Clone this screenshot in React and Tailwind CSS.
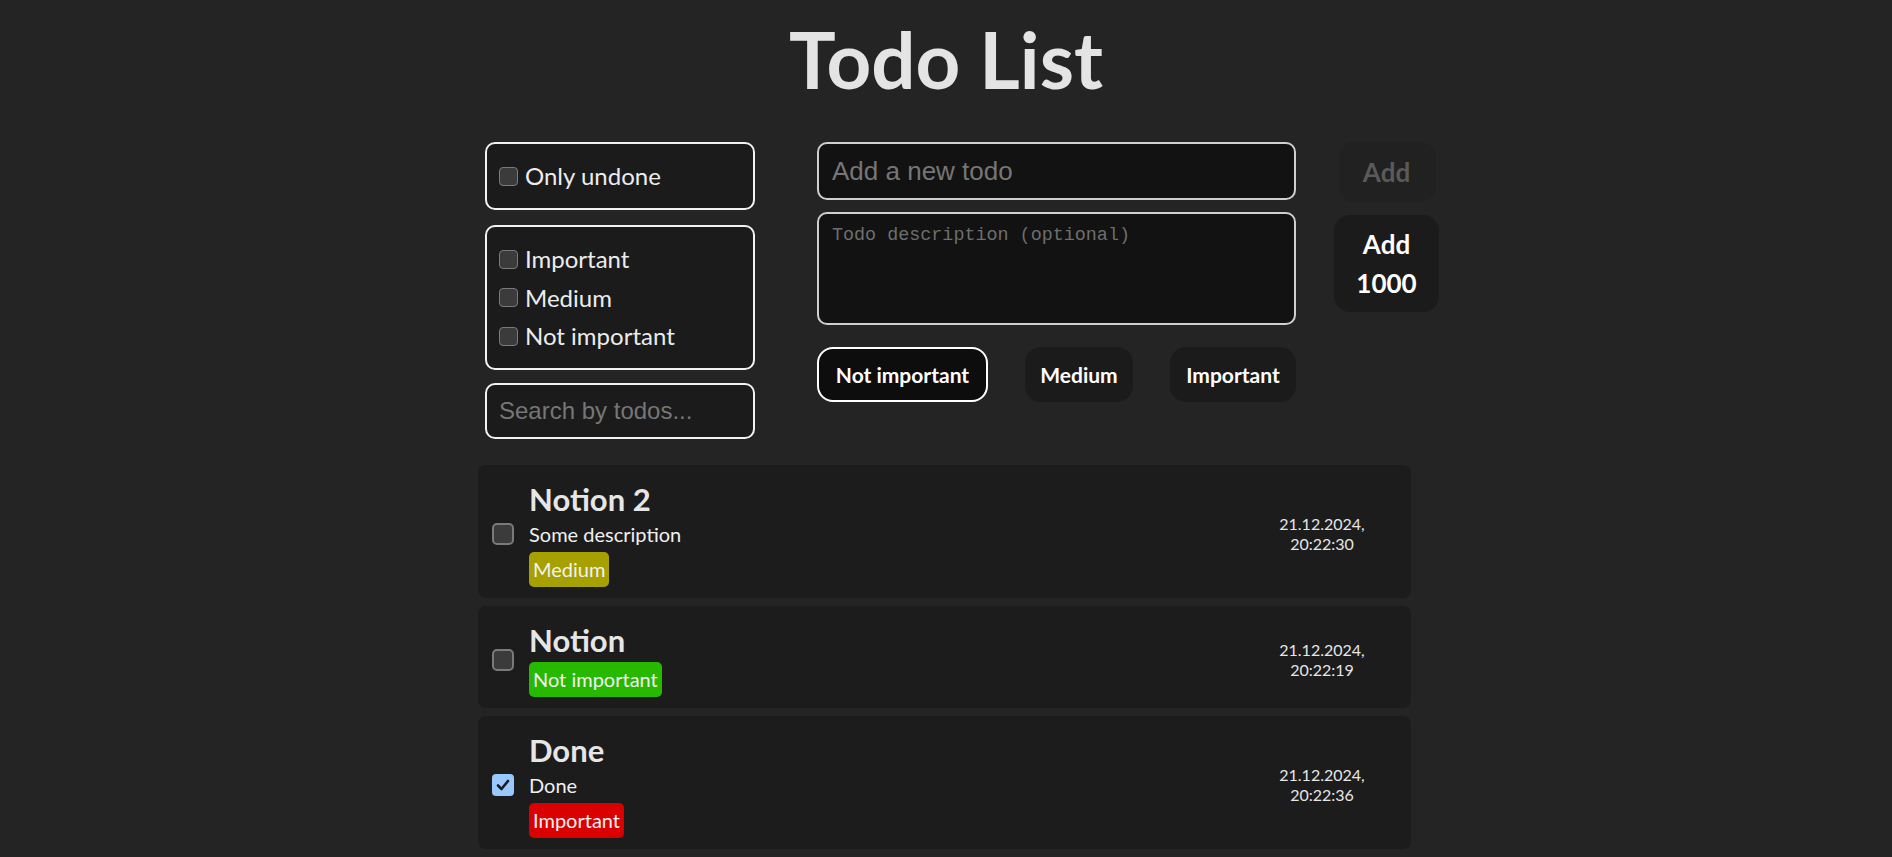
import React, { useState } from 'react';

const todos = [
  { id: 3, title: 'Notion 2', description: 'Some description', priority: 'medium', done: false, date: '21.12.2024,', time: '20:22:30' },
  { id: 2, title: 'Notion', description: '', priority: 'low', done: false, date: '21.12.2024,', time: '20:22:19' },
  { id: 1, title: 'Done', description: 'Done', priority: 'high', done: true, date: '21.12.2024,', time: '20:22:36' },
];

const badgeStyles = {
  low: { label: 'Not important', className: 'bg-[#27b800]' },
  medium: { label: 'Medium', className: 'bg-[#a6a000]' },
  high: { label: 'Important', className: 'bg-[#db0000]' },
};

const SmallBox = () => (
  <span className="w-[19px] h-[19px] shrink-0 rounded-[4px] border-[1.5px] border-[#7a7a7a] bg-[#3b3b3b]" />
);

const TodoBox = ({ checked }) =>
  checked ? (
    <span className="w-[22px] h-[22px] shrink-0 rounded-[4px] bg-[#99c8ff] flex items-center justify-center">
      <svg width="16" height="16" viewBox="0 0 16 16" fill="none">
        <path d="M3 8.5 L6.5 12 L13 4" stroke="#1b1b1b" strokeWidth="2.6" strokeLinecap="round" strokeLinejoin="round" />
      </svg>
    </span>
  ) : (
    <span className="w-[22px] h-[22px] shrink-0 rounded-[5px] border-2 border-[#7a7a7a] bg-[#3b3b3b]" />
  );

const TodoCard = ({ todo }) => {
  const badge = badgeStyles[todo.priority];
  return (
    <div className="bg-[#1c1c1c] rounded-[8px] flex items-center pl-[14px] pt-[16px] pb-[11px]">
      <TodoBox checked={todo.done} />
      <div className="ml-[15px] flex-1 flex flex-col items-start">
        <h2 className="text-[31px] font-bold leading-[36px] text-[#e6e6e6]">{todo.title}</h2>
        {todo.description && (
          <p className="text-[20px] leading-[28px] mt-[3px] text-[#f0f0f0]">{todo.description}</p>
        )}
        <span className={`mt-[4px] h-[35px] px-[4px] rounded-[5px] text-[20px] leading-[35px] text-[#f2f2f2] ${badge.className}`}>
          {badge.label}
        </span>
      </div>
      <div className="w-[120px] mr-[29px] text-center text-[16px] leading-[20px] text-[#e6e6e6]">
        <div>{todo.date}</div>
        <div>{todo.time}</div>
      </div>
    </div>
  );
};

export default function App() {
  const [priority] = useState('low');

  return (
    <div className="min-h-screen bg-[#242424] text-[#e6e6e6] font-['Lato',sans-serif]">
      <h1 className="text-center text-[78px] font-bold leading-[84px] pt-[17px] text-[#e4e4e4]">Todo List</h1>

      <div className="w-[936px] mx-auto mt-[41px]">
        <div className="flex items-start pl-[7px]">
          {/* filters */}
          <div className="w-[270px] shrink-0 flex flex-col">
            <div className="h-[68px] border-2 border-[#f2f2f2] rounded-[10px] bg-[#1b1b1b] flex items-center px-[12px]">
              <label className="flex items-center gap-[7px] text-[24px] text-[#ececec]">
                <SmallBox />
                Only undone
              </label>
            </div>
            <div className="mt-[15px] h-[145px] border-2 border-[#f2f2f2] rounded-[10px] bg-[#1b1b1b] flex flex-col justify-center px-[12px]">
              {['Important', 'Medium', 'Not important'].map(name => (
                <label key={name} className="h-[38.5px] flex items-center gap-[7px] text-[24px] text-[#ececec]">
                  <SmallBox />
                  {name}
                </label>
              ))}
            </div>
            <input
              type="text"
              placeholder="Search by todos..."
              className="mt-[13px] h-[56px] w-full border-2 border-[#f2f2f2] rounded-[10px] bg-[#1b1b1b] px-[12px] text-[24px] font-['Liberation_Sans',sans-serif] placeholder:text-[#767676] outline-none"
            />
          </div>

          {/* new todo */}
          <div className="ml-[62px] w-[479px] shrink-0 flex flex-col">
            <input
              type="text"
              placeholder="Add a new todo"
              className="h-[58px] w-full border-2 border-[#cfcfcf] rounded-[10px] bg-[#121212] px-[13px] text-[26px] font-['Liberation_Sans',sans-serif] placeholder:text-[#767676] outline-none"
            />
            <textarea
              placeholder="Todo description (optional)"
              className="mt-[12px] h-[113px] w-full resize-none border-2 border-[#cfcfcf] rounded-[10px] bg-[#121212] px-[13px] py-[10px] text-[18.4px] leading-[24px] font-['Liberation_Mono',monospace] placeholder:text-[#6e6e6e] outline-none"
            />
            <div className="mt-[22px] flex justify-between">
              <button className={`h-[55px] w-[171px] rounded-[16px] border-2 text-[21px] font-bold text-white ${priority === 'low' ? 'border-white bg-[#0d0d0d]' : 'border-transparent bg-[#1b1b1b]'}`}>
                Not important
              </button>
              <button className="h-[55px] w-[108px] rounded-[16px] border-2 border-transparent bg-[#1b1b1b] text-[21px] font-bold text-white">
                Medium
              </button>
              <button className="h-[55px] w-[126px] rounded-[16px] border-2 border-transparent bg-[#1b1b1b] text-[21px] font-bold text-white">
                Important
              </button>
            </div>
          </div>

          {/* actions */}
          <div className="ml-[38px] w-[105px] shrink-0 flex flex-col items-center">
            <button disabled className="h-[60px] w-[98px] rounded-[16px] bg-[#212121] text-[26px] font-bold text-[#5a5a5a]">
              Add
            </button>
            <button className="mt-[13px] h-[97px] w-[105px] rounded-[16px] bg-[#1b1b1b] text-[26px] leading-[39px] font-bold text-white">
              Add<br />1000
            </button>
          </div>
        </div>

        <div className="mt-[26px] w-[933px] flex flex-col gap-[8px]">
          {todos.map(todo => (
            <TodoCard key={todo.id} todo={todo} />
          ))}
        </div>
      </div>
    </div>
  );
}
